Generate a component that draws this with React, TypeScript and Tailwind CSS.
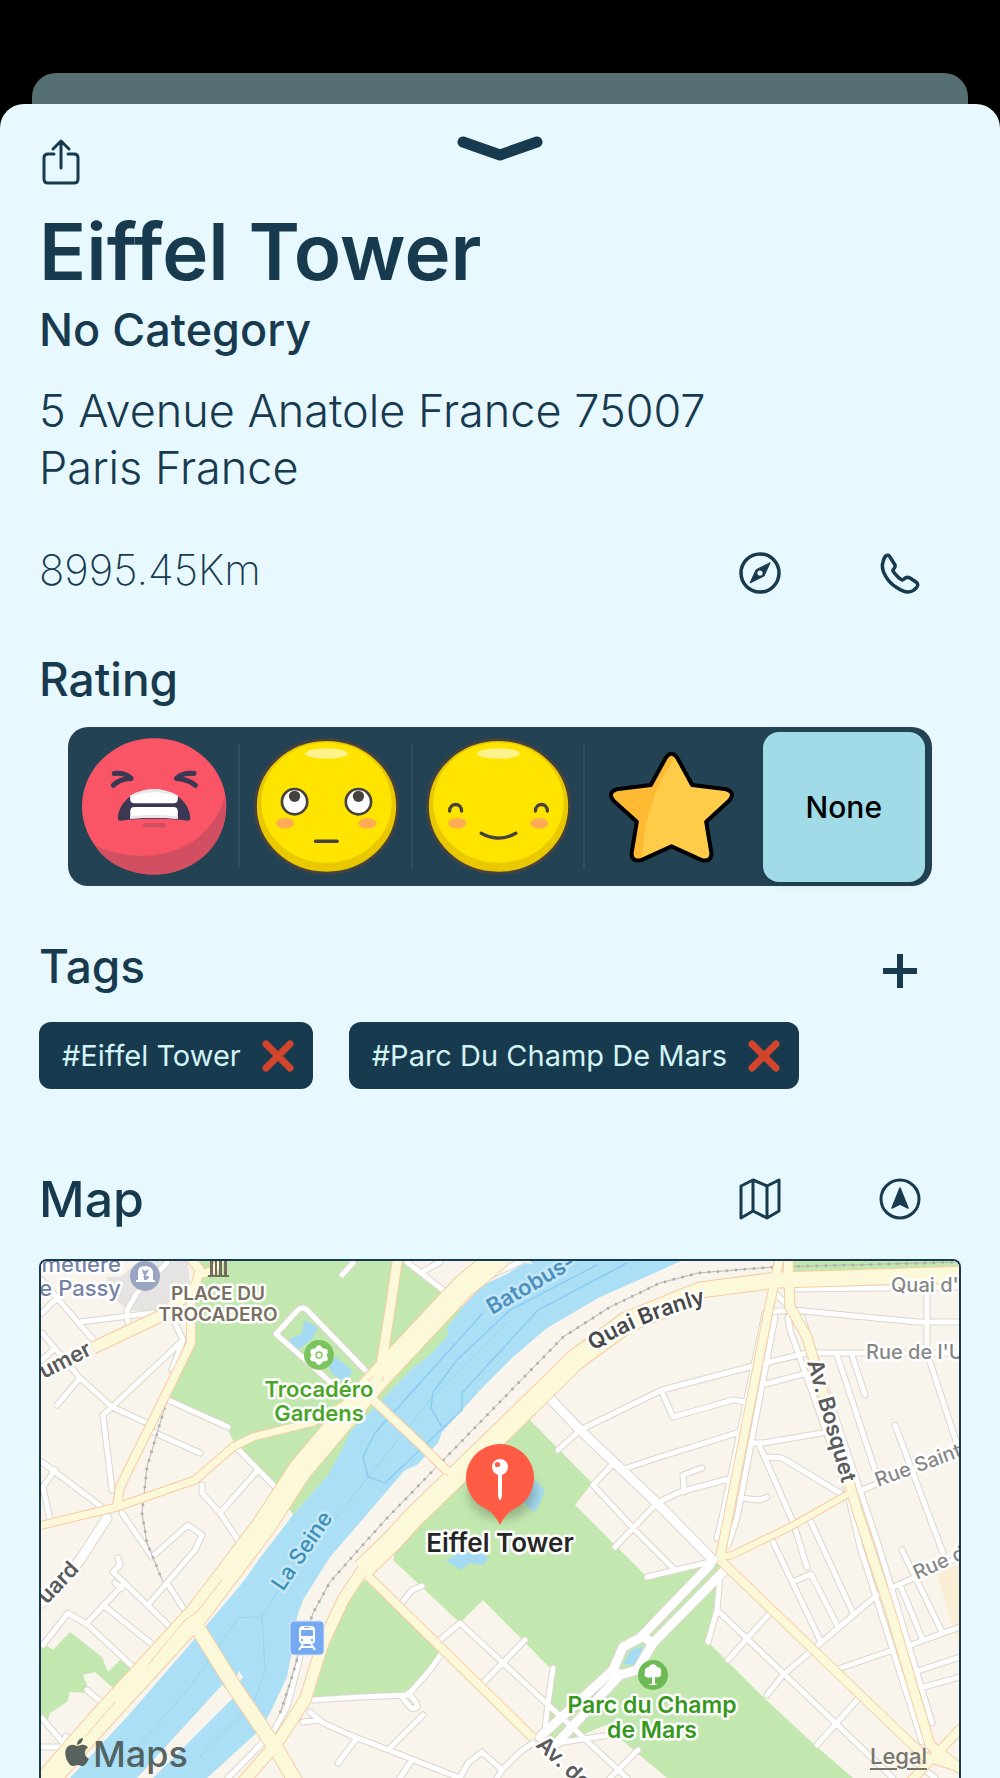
import { useState, type ReactNode } from "react";
import { FaApple } from "react-icons/fa";

const streets = [
  "M42 1280L57 1298L95 1342M42 1313L57 1298M80 1322L153 1313M128 1323L127 1310L130 1305L137 1293L167 1263",
  "M175 1323L183 1340L172 1370M183 1340L112 1407L103 1415L112 1490M42 1333L80 1378L112 1407L147 1423M80 1378L57 1405M53 1350L42 1360",
  "M168 1400L228 1427M153 1432L200 1453M237 1448L278 1490M258 1470L220 1513M202 1485L202 1493L220 1513L240 1543",
  "M42 1462L103 1508M55 1470L43 1487L50 1520M345 1395L276 1334L297 1311Q303 1305 308 1311L365 1370M353 1263L342 1275",
  "M122 1513L152 1557L188 1525L202 1535L195 1550L148 1605M167 1583L183 1608M118 1558L120 1565L113 1572L168 1625",
  "M123 1585L87 1623M115 1583L122 1588M103 1605L153 1645M43 1645L68 1613L88 1625L133 1667M87 1690L102 1703M42 1718L63 1743M42 1747L63 1747L66 1736",
  "M300 1657L287 1707L273 1732L228 1778M313 1700L360 1697L408 1695L430 1670L442 1653M402 1697L411 1708Q420 1710 416 1702L408 1693",
  "M303 1722L318 1720M310 1712L323 1723L350 1735L460 1778M357 1738L338 1763M423 1715L390 1748M412 1760L400 1778",
  "M460 1778L468 1763L482 1752L502 1770L497 1778M502 1770L520 1752L533 1743M400 1605L412 1590L422 1586",
  "M440 1640L460 1623L627 1778M525 1640L483 1683M553 1668L548 1703L545 1730M638 1750L610 1778M557 1743L610 1735",
  "M580 1430L662 1390L757 1365L807 1353L960 1353M580 1430L558 1450M662 1392L673 1417L733 1400L747 1402",
  "M627 1468L660 1457L740 1432M612 1465L593 1485L633 1528L675 1570M657 1503L680 1492L732 1478M702 1468L683 1475L684 1492",
  "M657 1503L615 1547M647 1577L710 1562M775 1293L787 1305M767 1312L793 1310L917 1322L960 1322M793 1289L960 1287",
  "M765 1313L722 1518L717 1538M775 1317L737 1518L728 1545M788 1317L790 1330L847 1490L860 1547L922 1742",
  "M802 1317L860 1490L880 1550L932 1723M762 1385L807 1373M752 1443L763 1443L822 1433M760 1447L793 1522L807 1567",
  "M768 1457L782 1458L840 1493M740 1498L760 1500L767 1497M837 1355L875 1470M852 1355L865 1395M927 1287L927 1353L958 1447",
  "M895 1425L943 1553M857 1492L960 1450M773 1542L820 1640M793 1582L811 1574L838 1627M810 1520L853 1613M877 1595L783 1675L767 1695",
  "M887 1590L960 1557M900 1585L922 1638M902 1550L942 1632M905 1647L960 1627M915 1672L960 1657M920 1688L960 1677M835 1670L893 1650",
  "M720 1575L717 1610L708 1642M717 1610L893 1778M768 1615L728 1660M857 1700L817 1745M407 1262L443 1290M424 1271L440 1262",
  "M520 1262L485 1278L462 1303M930 1748L910 1756M915 1762L935 1778",
].join("");

const promenades =
  "M107 1518L80 1560L42 1603M545 1393L580 1430L657 1503L713 1560M710 1565L660 1617L640 1638L623 1647L613 1670L540 1737M723 1572L653 1643L637 1670L620 1675L557 1743M643 1637L653 1643M613 1670L620 1675";

const avenues = [
  { w: 23, d: "M500 1256L463 1287L375 1381L300 1470L263 1527L197 1614L97 1723L44 1784" },
  { w: 9, d: "M398 1256L390 1310L380 1372" },
  { w: 8, d: "M370 1397L420 1444L452 1476" },
  { w: 20, d: "M362 1570L393 1540L413 1518L517 1417L575 1360L627 1322L690 1297" },
  { w: 15, d: "M670 1302L700 1290L777 1280L847 1278L965 1274" },
  { w: 11, d: "M364 1568L343 1600L323 1643L305 1700L277 1743L243 1782" },
  { w: 8, d: "M367 1575L533 1738" },
  { w: 14, d: "M197 1627L235 1688L277 1750L297 1784" },
  { w: 11, d: "M93 1348L163 1315L200 1283" },
  { w: 8, d: "M188 1256L200 1270L191 1300L191 1343L163 1400L120 1487L117 1507" },
  { w: 7, d: "M200 1275L214 1270L222 1258" },
  { w: 7, d: "M38 1526L117 1507L195 1480L233 1447L253 1437L313 1422L350 1402" },
  { w: 8, d: "M780 1256L768 1313L728 1518L720 1557" },
  { w: 9, d: "M788 1256L790 1307L807 1337L857 1510L890 1610L930 1745L962 1770" },
  { w: 6, d: "M717 1558L732 1555L790 1527L850 1493" },
  { w: 8, d: "M720 1560L925 1757L962 1768M962 1727L910 1782" },
];

const railways =
  "M387 1518L563 1337L610 1307L660 1283L698 1273L773 1267L960 1262M387 1518L360 1548L330 1582L313 1613L300 1650L290 1683L280 1713M167 1400L147 1467L142 1513L147 1543L163 1582M278 1754L292 1778";

function MapDrawing() {
  return (
    <svg
      viewBox="41 1261 918 517"
      preserveAspectRatio="xMidYMin slice"
      className="block h-full w-full"
      role="img"
      aria-label="Map of the area round the Eiffel Tower"
      fontFamily="Inter, sans-serif"
    >
      <rect x="30" y="1250" width="940" height="540" fill="#f9f4ec" />
      <path d="M106 1277L120 1277L140 1261L188 1261L190 1285L178 1305L160 1312L128 1310L118 1302Z" fill="#e6e4e3" />
      <path d="M937 1573L960 1564L960 1650L952 1625Z" fill="#faeed4" />
      <g fill="#c2e8b0">
        <path d="M200 1261L195 1283L193 1347L168 1398L227 1428L238 1450L278 1490L293 1515L460 1330L465 1308L407 1261Z" />
        <path d="M527 1417L592 1483L575 1505L647 1577L722 1560L708 1642L763 1697L817 1747L853 1778L667 1778L637 1753L605 1725L560 1745L545 1735L550 1668L483 1600L460 1623L393 1560L400 1535Z" />
        <path d="M365 1580L442 1653L408 1692L350 1697L313 1697L330 1637L340 1603Z" />
        <path d="M41 1642L53 1650L70 1632L102 1657L108 1672L120 1660L133 1670L113 1688L95 1672L83 1675L90 1693L70 1692L67 1702L50 1713L48 1720L41 1717Z" />
        <path d="M793 1261H960V1269L793 1273Z" />
      </g>
      <path
        d="M530 1261L533 1264L525 1263L505 1275L483 1285L465 1304L447 1328L448 1335L430 1355L413 1368L380 1402L350 1432L343 1448L328 1475L317 1488L293 1515L260 1558L243 1582L205 1627L127 1717L70 1778L207 1778L260 1730L270 1713L287 1677L292 1650L297 1617L303 1600L330 1557L362 1520L405 1470L417 1465L438 1443L442 1432L483 1387L513 1357L547 1328L600 1297L650 1275L681 1261Z"
        fill="#abdff5"
      />
      <path d="M137 1778L222 1685L234 1697L153 1778ZM236 1677L239 1671L243 1677L240 1681Z" fill="#f9f4ec" />
      <g fill="#a5dbf2">
        <path d="M304 1320L318 1327L312 1339L298 1350L288 1340L302 1333ZM328 1364L336 1357L352 1370L348 1384L332 1374Z" />
        <path d="M535 1480L545 1490L536 1512L528 1508L524 1502ZM446 1561L462 1550L484 1551L488 1559L483 1565L470 1563L461 1570Z" />
      </g>
      <g fill="none" stroke="#9bd3ee" strokeWidth="1">
        <path d="M120 1767L190 1687L238 1618L262 1616L277 1593L350 1500L430 1400L510 1320M262 1616L265 1670L255 1700L200 1757" />
      </g>
      <g fill="none" stroke="#8accf6" strokeWidth="1.5">
        <path d="M627 1263L538 1310L462 1393L462 1410L385 1483L368 1477L363 1457L375 1433L483 1313" />
        <path d="M597 1265L510 1310L457 1360L433 1392L431 1408L442 1427" />
      </g>
      <g fill="none" strokeLinecap="round" strokeLinejoin="round">
        <path d={streets} stroke="#dcd5cd" strokeWidth="7" />
        <path d={promenades} stroke="#dcd5cd" strokeWidth="11" />
        <path d={streets} stroke="#fff" strokeWidth="5" />
        <path d={promenades} stroke="#fff" strokeWidth="9" />
      </g>
      <path d="M631 1650L643 1646L641 1653L634 1665L623 1664Z" fill="#a5dbf2" />
      <path d={railways} fill="none" stroke="#b9b7b5" strokeWidth="1" />
      <path d={railways} fill="none" stroke="#b0aeae" strokeWidth="3" strokeDasharray="0 9" strokeLinecap="round" />
      <g fill="none" strokeLinejoin="round">
        {avenues.map((a) => (
          <path key={a.d} d={a.d} stroke="#f7cda1" strokeWidth={a.w + 2} />
        ))}
        {avenues.map((a) => (
          <path key={a.d} d={a.d} stroke="#fcf9da" strokeWidth={a.w} />
        ))}
      </g>
      <g stroke="#f7cda1" strokeWidth="1" fill="none">
        <path d="M222 1580L197 1612L185 1620M185 1620L148 1665M115 1702L85 1737M368 1381L373 1377M381 1381L384 1377M445 1473L448 1476" />
      </g>

      <g stroke="#fff" strokeWidth="5" strokeLinejoin="round" paintOrder="stroke" fontWeight="500">
        <g fontSize="22" fill="#7682a5" textAnchor="end">
          <text x="121" y="1272">metière</text>
          <text x="121" y="1296">e Passy</text>
        </g>
        <g fontSize="19" fill="#797162" fontWeight="600" textAnchor="middle">
          <text x="218" y="1300">PLACE DU</text>
          <text x="218" y="1321">TROCADERO</text>
        </g>
        <g fontSize="22" fill="#4aa527" fontWeight="600" textAnchor="middle">
          <text x="319" y="1397">Trocadéro</text>
          <text x="319" y="1421">Gardens</text>
        </g>
        <g fontSize="23" fill="#37981d" fontWeight="600" textAnchor="middle">
          <text x="652" y="1713">Parc du Champ</text>
          <text x="652" y="1738">de Mars</text>
        </g>
        <g fill="#5b5b5b" fontSize="22" fontWeight="600">
          <text transform="translate(44 1379) rotate(-27)">umer</text>
          <text transform="translate(47 1605) rotate(-47)">uard</text>
          <text transform="translate(807 1362) rotate(74)">Av. Bosquet</text>
          <text transform="translate(535 1746) rotate(43)">Av. de</text>
        </g>
        <path id="quai-branly" d="M594 1351Q640 1319 730 1297" fill="none" stroke="none" />
        <text fontSize="22" fill="#484848" fontWeight="600">
          <textPath href="#quai-branly">Quai Branly</textPath>
        </text>
        <g fill="#878787" fontSize="20">
          <text x="891" y="1292">Quai d'</text>
          <text x="866" y="1359">Rue de l'U</text>
          <text transform="translate(878 1487) rotate(-20)">Rue Saint</text>
          <text transform="translate(917 1580) rotate(-24)">Rue de</text>
        </g>
        <text fontSize="22" fill="#4b90c0" fontWeight="600" stroke="#c5e8f7" transform="translate(492 1315) rotate(-30)">Batobus-</text>
        <text fontSize="22" fill="#3c8fb8" stroke="#c5e8f7" transform="translate(283 1592) rotate(-56)">La Seine</text>
      </g>

      <g>
        <circle cx="145" cy="1276" r="15" fill="#9aa5c3" />
        <path d="M138 1280V1272Q138 1266 145 1266T153 1272V1280H155V1282H136V1280Z" fill="#fff" />
        <path d="M142 1269L143 1274H147L149 1269L145 1271ZM144 1274V1280H146V1274ZM141 1276Q145 1276 145 1280Q149 1280 149 1276" fill="#9aa5c3" />
      </g>
      <g fill="#736b5b">
        <path d="M208 1275H229V1277H208ZM210 1261H213V1275H210ZM215 1261H217V1275H215ZM219 1261H222V1275H219ZM224 1261H227V1275H224Z" />
      </g>
      <g transform="translate(319 1355)">
        <circle r="15" fill="#7bc45d" />
        <g fill="#fff">
          {[0, 60, 120, 180, 240, 300].map((a) => (
            <path key={a} transform={`rotate(${a})`} d="M0 -2L-4 -6Q-3 -9 0 -10Q3 -9 4 -6Z" />
          ))}
          <circle r="5" />
        </g>
        <circle r="3" fill="none" stroke="#7bc45d" strokeWidth="1.3" />
      </g>
      <g transform="translate(653 1675)">
        <circle r="15" fill="#6dbb54" />
        <path d="M-1 9V2C-6 4-10 1-8-3C-9-7-5-8-4-8C-2-12 3-11 4-8C8-8 9-4 8-2C9 2 5 3 2 2V9H4V10H-4V9Z" fill="#fff" />
      </g>
      <g transform="translate(290 1621)">
        <rect width="34" height="34" rx="4" fill="#75a9f1" stroke="#d7e5f8" strokeWidth="1" />
        <rect x="9" y="5" width="16" height="18" rx="4" fill="#fff" />
        <rect x="11" y="9" width="12" height="6" rx="1" fill="#75a9f1" />
        <circle cx="12" cy="19" r="1.2" fill="#75a9f1" />
        <circle cx="22" cy="19" r="1.2" fill="#75a9f1" />
        <path d="M13 23L9 29M21 23L25 29M11 26H23" stroke="#fff" strokeWidth="2" />
        <path d="M14 6.5H20" stroke="#75a9f1" strokeWidth="1" />
      </g>

      <ellipse cx="502" cy="1492" rx="34" ry="28" fill="#3c4a32" opacity="0.3" className="blur-[5px]" />
      <path d="M500 1525C497 1519 493 1513 486 1509A34 34 0 1 1 514 1509C507 1513 503 1519 500 1525Z" fill="#ff5b45" />
      <circle cx="500" cy="1467" r="8" fill="#fff" />
      <circle cx="497.500" cy="1464.500" r="2.600" fill="#ff5b45" />
      <path d="M498 1474H502V1494Q501.500 1500 500 1500Q498.500 1500 498 1494Z" fill="#fff" />
      <text
        x="500" y="1552" textAnchor="middle" fontSize="26" fontWeight="600"
        fill="#262626" stroke="#fff" strokeWidth="5" strokeLinejoin="round" paintOrder="stroke"
      >
        Eiffel Tower
      </text>
    </svg>
  );
}

function AngryFace() {
  return (
    <svg viewBox="60 55 436 411" className="h-[137px] w-[145px]" aria-hidden="true">
      <ellipse cx="277" cy="260" rx="217" ry="205" fill="#fa5567" />
      <path d="M98 376C230 440 430 420 490 232C510 370 400 465 277 465C200 465 130 430 98 376Z" fill="#d14f60" />
      <g fill="none" stroke="#3a3853" strokeWidth="15" strokeLinecap="round" strokeLinejoin="round">
        <path d="M157 161Q190 158 208 176Q170 178 154 197M397 161Q362 158 344 176Q380 178 401 197" />
      </g>
      <path d="M168 298C168 250 215 208 277 208S386 250 386 298Q384 304 376 303C330 295 225 295 178 303Q169 304 168 298Z" fill="#3a3853" />
      <path d="M205 228Q277 188 348 228V238Q348 251 335 251H218Q205 251 205 238ZM205 297V275Q205 262 218 262H335Q348 262 348 275V297Q277 291 205 297Z" fill="#fff" />
      <path d="M205 228Q277 188 348 228V233Q277 203 205 233ZM205 290Q277 280 348 290V297Q277 291 205 297Z" fill="#e8e8ec" />
      <rect x="242" y="310" width="70" height="14" rx="7" fill="#d14f60" />
    </svg>
  );
}

function YellowFace({ children }: { children: ReactNode }) {
  return (
    <svg viewBox="577 55 436 411" className="h-[137px] w-[145px]" aria-hidden="true">
      <ellipse cx="795" cy="260" rx="214" ry="201" fill="#e9c800" stroke="#46423f" strokeWidth="9" />
      <ellipse cx="795" cy="249" rx="196" ry="181" fill="#ffe400" />
      <ellipse cx="795" cy="101" rx="64" ry="16" fill="#fff28c" />
      <ellipse cx="671" cy="311" rx="27" ry="16" fill="#ffaa55" />
      <ellipse cx="918" cy="311" rx="27" ry="16" fill="#ffaa55" />
      <g fill="none" stroke="#46423f" strokeWidth="10" strokeLinecap="round">{children}</g>
    </svg>
  );
}

const starOutline =
  "M494 112Q511 88 528 112L573 194L676 207Q705 217 683 242L615 304L631 400Q630 425 603 420L511 378L419 420Q392 425 391 400L407 304L338 242Q317 217 346 207L449 194Z";

function Star() {
  return (
    <svg viewBox="324 92 374 336" className="h-[112px] w-[125px]" aria-hidden="true">
      <clipPath id="star-shape">
        <path d={starOutline} />
      </clipPath>
      <path d={starOutline} fill="#ffcc49" />
      <path d="M530 100Q430 230 422 425H320V90Z" fill="#ffb933" clipPath="url(#star-shape)" />
      <path d={starOutline} fill="none" stroke="#000" strokeWidth="12" strokeLinejoin="round" />
    </svg>
  );
}

const ratings: { id: string; name: string; face: ReactNode }[] = [
  { id: "bad", name: "Bad", face: <AngryFace /> },
  {
    id: "meh",
    name: "So-so",
    face: (
      <YellowFace>
        <g fill="#fff" strokeWidth="8">
          <circle cx="699" cy="246" r="38" />
          <circle cx="891" cy="246" r="38" />
        </g>
        <g fill="#46423f" stroke="none">
          <circle cx="699" cy="230" r="17" />
          <circle cx="891" cy="230" r="17" />
        </g>
        <path d="M762 365H827" />
      </YellowFace>
    ),
  },
  {
    id: "good",
    name: "Good",
    face: (
      <YellowFace>
        <path d="M648 274C648 248 684 248 684 274M906 274C906 248 942 248 942 274M743 341Q795 370 847 341" />
      </YellowFace>
    ),
  },
  { id: "great", name: "Great", face: <Star /> },
  { id: "none", name: "None", face: null },
];

function RatingPicker() {
  const [value, setValue] = useState("none");
  return (
    <fieldset
      aria-labelledby="rating-heading"
      className="mx-[29px] mt-5 grid grid-cols-5 grid-rows-[159px] rounded-[20px] bg-[#234354] pr-0.5"
    >
      {ratings.map((r, i) => (
        <label
          key={r.id}
          className={
            "relative flex cursor-pointer items-center justify-center " +
            (i < 3 ? "after:absolute after:top-[17px] after:right-0 after:h-[125px] after:w-0.5 after:rounded after:bg-[#324c60]" : "")
          }
        >
          <input
            type="radio"
            name="rating"
            value={r.id}
            aria-label={r.name}
            checked={value === r.id}
            onChange={() => setValue(r.id)}
            className="sr-only"
          />
          <span
            className={
              "flex h-[150px] w-[162px] items-center justify-center rounded-2xl " +
              (value === r.id ? "bg-[#a0dbe7] shadow-md" : "")
            }
          >
            {r.face ?? <span className="text-[30px] leading-9 font-medium text-black">{r.name}</span>}
          </span>
        </label>
      ))}
    </fieldset>
  );
}

function IconButton({ label, children }: { label: string; children: ReactNode }) {
  return (
    <button type="button" aria-label={label} className="flex size-12 items-center justify-center">
      <svg viewBox="0 0 48 48" className="size-12" fill="none" stroke="currentColor" strokeWidth="3.500" strokeLinecap="round" strokeLinejoin="round">
        {children}
      </svg>
    </button>
  );
}

function Tag({ name }: { name: string }) {
  return (
    <li className="flex h-[67px] items-center gap-5 rounded-xl bg-[#173a4f] pr-[18px] pl-[23px] text-[29px] leading-9 text-[#d3f3f4]">
      {name}
      <button type="button" aria-label={"Remove " + name}>
        <svg viewBox="0 0 34 34" className="size-[34px]" stroke="#d2452c" strokeWidth="7" strokeLinecap="round">
          <path d="M5 5L29 29M29 5L5 29" />
        </svg>
      </button>
    </li>
  );
}

export default function App() {
  return (
    <div className="flex min-h-screen flex-col bg-black pt-[73px] font-['Inter',sans-serif] text-[#173a4f]">
      <div className="mx-8 h-[31px] rounded-t-[24px] bg-[#566f73]" />
      <main className="flex flex-1 flex-col rounded-t-[24px] bg-[#e7f9ff] px-[39px]">
        <header className="grid h-[100px] grid-cols-3 items-start pt-8">
          <button type="button" aria-label="Share" className="w-11 pt-[2px]">
            <svg viewBox="0 0 44 48" className="h-12 w-11" fill="none" stroke="currentColor" strokeWidth="3" strokeLinecap="round" strokeLinejoin="round">
              <path d="M15 16H9Q5 16 5 20V41Q5 45 9 45H35Q39 45 39 41V20Q39 16 35 16H29M22 30V3M14 11L22 3L30 11" />
            </svg>
          </button>
          <button type="button" aria-label="Close" className="justify-self-center">
            <svg viewBox="0 0 86 26" className="h-[26px] w-[86px]" fill="none" stroke="currentColor" strokeWidth="11" strokeLinecap="round" strokeLinejoin="round">
              <path d="M6 6L43 19L80 6" />
            </svg>
          </button>
        </header>

        <h1 className="text-[78px] leading-[96px] font-semibold">Eiffel Tower</h1>
        <p className="mt-0.5 text-[45px] leading-[56px] font-medium">No Category</p>
        <address className="mt-6 text-[45px] leading-[57px] font-light not-italic">
          5 Avenue Anatole France 75007
          <br />
          Paris France
        </address>

        <div className="mt-[47px] flex items-center justify-between pr-[37px]">
          <p className="text-[42px] leading-[52px] font-extralight">8995.45Km</p>
          <div className="flex gap-[92px] pt-1.5">
            <IconButton label="Open website">
              <circle cx="24" cy="24" r="19" />
              <path d="M34 14L28 27L14 34L20 21Z" fill="currentColor" strokeWidth="1" />
              <circle cx="24" cy="24" r="2.600" fill="#e7f9ff" stroke="none" />
            </IconButton>
            <IconButton label="Call">
              <path d="M7 13C4 22 13 34 20 38C27 43 33 45 38 41C42 38 43 35 40 33L34 29C32 28 30 28 28 30C26 32 26 31 23 29C19 25 18 24 17 22C16 20 20 20 19 16L14 8C12 4 8 7 7 13Z" />
            </IconButton>
          </div>
        </div>

        <h2 id="rating-heading" className="mt-[54px] text-[46px] leading-[56px] font-medium">Rating</h2>
        <RatingPicker />

        <div className="mt-[52px] flex items-start justify-between pr-[37px]">
          <h2 className="text-[46px] leading-[56px] font-medium">Tags</h2>
          <div className="pt-2">
            <IconButton label="Add tag">
              <path d="M7 25H41M24 8V42" strokeWidth="6" strokeLinecap="butt" />
            </IconButton>
          </div>
        </div>
        <ul className="mt-7 flex flex-wrap gap-9">
          <Tag name="#Eiffel Tower" />
          <Tag name="#Parc Du Champ De Mars" />
        </ul>

        <div className="mt-20 flex items-center justify-between pr-[37px]">
          <h2 className="text-[50px] leading-[60px] font-medium">Map</h2>
          <div className="flex gap-[92px]">
            <IconButton label="Show on map">
              <path d="M5 11L17 5L31 11L43 5V36L31 43L17 36L5 43ZM17 5V36M31 11V43" strokeWidth="3" />
            </IconButton>
            <IconButton label="Directions">
              <circle cx="24" cy="24" r="19" strokeWidth="3" />
              <path d="M24 13L32 33L24 29L16 33Z" fill="currentColor" strokeWidth="1.500" />
            </IconButton>
          </div>
        </div>

        <section aria-label="Map" className="relative mt-[30px] min-h-[519px] flex-1 overflow-hidden rounded-t-lg border-2 border-b-0 border-[#173a4f]">
          <div className="absolute inset-0">
            <MapDrawing />
          </div>
          <div className="absolute bottom-0 left-5 flex items-center text-[36px] leading-[48px] font-medium text-[#47524f]/90">
            <FaApple className="-mt-1 size-8" aria-hidden="true" />
            <span>Maps</span>
          </div>
          <a href="#legal" className="absolute right-8 bottom-2 text-[22px] leading-7 font-medium text-[#77756f] underline decoration-2 underline-offset-4">
            Legal
          </a>
        </section>
      </main>
    </div>
  );
}
